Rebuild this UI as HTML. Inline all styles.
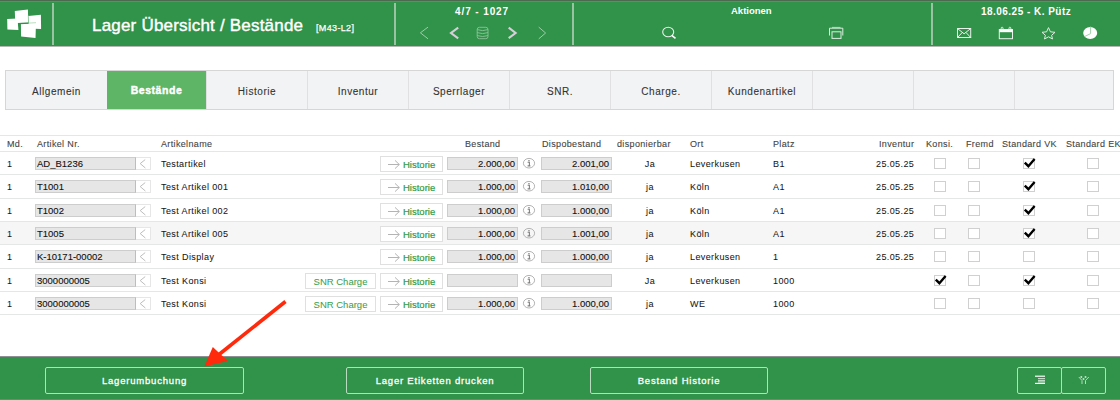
<!DOCTYPE html>
<html><head><meta charset="utf-8">
<style>
*{margin:0;padding:0;box-sizing:border-box}
html,body{width:1120px;height:400px;overflow:hidden;background:#fff;font-family:"Liberation Sans",sans-serif;color:#222}
svg{position:absolute;overflow:visible}
#hdr{position:absolute;left:0;top:0;width:1120px;height:46px;background:#31924a}
#hdr .top{position:absolute;left:0;top:0;width:1120px;height:1px;background:#4d6a50}
#hdr .top2{position:absolute;left:0;top:1px;width:1120px;height:1px;background:#479b5c}
#hdr .sep{position:absolute;top:3px;width:2px;height:42px;background:#9ac3a2}
.ht{position:absolute;color:#fff;font-weight:bold;font-size:10px;white-space:nowrap;line-height:1}
#hline{position:absolute;left:0;top:46px;width:1120px;height:1px;background:#b4b8b4}
#tabs{position:absolute;left:5px;top:70px;width:1109px;height:40px;border:1px solid #d6d6d6;background:#f2f3f5}
.tab{position:absolute;top:0;height:38px;border-right:1px solid #e0e0e2;font-size:10px;letter-spacing:0.55px;color:#333;text-align:center;line-height:41px;white-space:nowrap;-webkit-text-stroke:0.1px #333}
.tab.act{background:#5db565;color:#fff;font-weight:bold;top:0;height:38px;font-size:10.5px;letter-spacing:0.55px;-webkit-text-stroke:0.4px #fff;line-height:39px}
.hl{position:absolute;left:0;width:1120px;height:1px;background:#e4e7e5}
.th{position:absolute;top:140px;font-size:9px;color:#444;white-space:nowrap;line-height:1;letter-spacing:0.35px;-webkit-text-stroke:0.1px #444}
.row{position:absolute;left:0;width:1120px}
.td{position:absolute;top:9px;font-size:9px;letter-spacing:0.4px;color:#151515;white-space:nowrap;line-height:1;-webkit-text-stroke:0.05px #151515}
.inp{position:absolute;top:6px;height:13px;background:#e6e6e6;border:1px solid #cdcdcd;font-size:9.5px;line-height:12px;color:#111;padding:0 2px 0 1px;white-space:nowrap;-webkit-text-stroke:0.1px #111}
.inp.an{left:35px;width:101px;border-right-color:#bdbdbd}
.inp.num{text-align:right}
.lt{position:absolute;left:136px;top:6px;width:15px;height:13px;border:1px solid #e6e6e6;border-left:0;background:#fff}

.btn{position:absolute;top:5px;height:16px;border:1px solid #e0e0e0;background:#fff;font-size:9.5px;color:#2f9a44;line-height:16px;white-space:nowrap;-webkit-text-stroke:0.2px #2f9a44}
.btn.his{left:380px;width:63px;padding-left:22px;-webkit-text-stroke:0.2px #2f9a44}
.btn.snr{left:305px;width:71px;text-align:center;color:#3a9f4e;-webkit-text-stroke:0.05px #3a9f4e}
.arr{position:absolute;left:7px;top:6px;width:11px;height:1px;background:#aaa}
.arr:after{content:"";position:absolute;right:0;top:-3px;width:5px;height:5px;border-right:1px solid #aaa;border-top:1px solid #aaa;transform:rotate(45deg);transform-origin:100% 0}
.info{position:absolute;left:523px;top:7px;width:11px;height:11px;border:1px solid #aaa;border-radius:50%;font-size:8px;color:#888;text-align:center;line-height:9px;font-family:"Liberation Serif",serif}
.cb{position:absolute;top:7px;width:12px;height:11px;border:1px solid #d0d0d0;background:#fff}
.ck{position:absolute;left:1px;top:-2px;width:9px;height:12px}
#ftr{position:absolute;left:0;top:356px;width:1120px;height:44px;background:#31924a}
#ftr .top{position:absolute;left:0;top:0;width:1120px;height:1px;background:#8f8f96}
.fb{position:absolute;top:11px;height:27px;border:1px solid #b9dbc0;border-radius:2px;color:#fff;font-size:9.5px;font-weight:normal;letter-spacing:0.8px;text-align:center;line-height:25px;white-space:nowrap;-webkit-text-stroke:0.3px #fff}

#ftr .bot{position:absolute;left:0;top:43px;width:1120px;height:1px;background:#519b63}

</style></head><body>
<div id="hdr">
  <div class="top"></div><div class="top2"></div>
  <svg width="50" height="46" style="left:0;top:0">
    <polygon points="14.8,11 27.9,9.4 28.3,22.7 15.3,23.1" fill="#fff"/>
    <polygon points="7.2,19.1 17.5,18.6 18.4,29.9 7.4,29.4" fill="#fff"/>
    <polygon points="28.2,15.9 40.9,14.8 41.1,29 29.2,28.5" fill="#fff"/>
    <polyline points="28.3,15.5 28.6,22.9" fill="none" stroke="#8cc698" stroke-width="0.7"/>
    <polygon points="20.7,24 36,23.1 35.5,38 21.1,36.6" fill="#fff"/>
    <polyline points="20.4,37 20,23.6 28.6,23.1" fill="none" stroke="#31924a" stroke-width="1.3"/><polyline points="28.6,23.1 36,22.7" fill="none" stroke="#a8d4b0" stroke-width="0.8"/>
  </svg>
  <div class="sep" style="left:52px"></div>
  <div class="sep" style="left:394px"></div>
  <div class="sep" style="left:572px"></div>
  <div class="sep" style="left:931px"></div>
  <div class="ht" id="title" style="left:92px;top:17px;font-size:17px;font-weight:normal;letter-spacing:0.2px;-webkit-text-stroke:0.4px #fff">Lager Übersicht / Bestände</div>
  <div class="ht" id="code" style="left:316px;top:24px;font-size:9px;font-weight:normal;letter-spacing:0.35px;-webkit-text-stroke:0.25px #fff">[M43-L2]</div>
  <div class="ht" id="nav" style="left:455px;top:7px;letter-spacing:0.9px">4/7 - 1027</div>
  <div class="ht" id="akt" style="left:731px;top:6px;font-size:9.5px">Aktionen</div>
  <div class="ht" id="date" style="left:981px;top:7px;letter-spacing:0.47px">18.06.25 - K. Pütz</div>
  <svg width="1120" height="46" style="left:0;top:0">
    <polyline points="428,27.1 420.4,32.8 428,38.8" fill="none" stroke="#9acfa6" stroke-width="1"/>
    <polyline points="458.2,27.7 451,33 458.2,38.4" fill="none" stroke="#d6cfd9" stroke-width="2.1"/>
    <g fill="none" stroke="#8cc598" stroke-width="0.9">
      <rect x="477.2" y="27.3" width="10.8" height="11.4" rx="2.2"/>
      <path d="M477.2,29.6Q482.6,31.6 488,29.6M477.2,32.6Q482.6,34.6 488,32.6M477.2,35.6Q482.6,37.4 488,35.6"/>
    </g>
    <polyline points="508.7,27.6 515.6,33 508.7,38.1" fill="none" stroke="#d6cfd9" stroke-width="2.1"/>
    <polyline points="538.7,27.1 545.6,33 538.7,38.9" fill="none" stroke="#9acfa6" stroke-width="1"/>
    <ellipse cx="668.2" cy="32" rx="5.5" ry="4.7" fill="none" stroke="#e8f2ea" stroke-width="1.1"/>
    <line x1="671.8" y1="35.3" x2="675.5" y2="38.3" stroke="#fff" stroke-width="1.6"/>
    <g fill="none" stroke="#dcefe0" stroke-width="1">
      <path d="M829.5,35.5 V28.2 H842.8 V35.5"/><path d="M832,27.4 H840.5" stroke="#b8dcc0"/>
      <rect x="832" y="31.8" width="9" height="6.6"/>
    </g>
    <g fill="none" stroke="#e8f4ea" stroke-width="1">
      <rect x="957.5" y="28.5" width="13.2" height="9"/>
      <polyline points="957.5,28.5 964.1,33.8 970.7,28.5"/><path d="M957.5,37.5L962.3,32.4M970.7,37.5L965.9,32.4"/>
      <rect x="999.3" y="29.5" width="13.2" height="9.2"/>
    </g>
    <rect x="999.3" y="29.2" width="13.2" height="3" fill="#fff"/>
    <g fill="none" stroke="#e8f4ea" stroke-width="0.9"><rect x="1001.2" y="27.2" width="1.8" height="3.2" rx="0.9"/><rect x="1009" y="27.2" width="1.8" height="3.2" rx="0.9"/></g>
    <polygon points="1048.5,27.6 1050.4,31.8 1055,32.3 1051.6,35.3 1052.5,39 1048.5,36.8 1044.5,39 1045.4,35.3 1042,32.3 1046.6,31.8" fill="none" stroke="#dcefe0" stroke-width="1"/>
    <ellipse cx="1090.2" cy="33" rx="7" ry="6.1" fill="#fff"/>
    <polyline points="1090.6,26.6 1090.6,33.6 1084.5,36.6" fill="none" stroke="#a3d0ad" stroke-width="1"/>
  </svg>
</div>
<div id="hline"></div>
<div id="tabs">
  <div class="tab" style="left:0;width:102px">Allgemein</div>
  <div class="tab act" style="left:101px;width:100px">Bestände</div>
  <div class="tab" style="left:201px;width:101px">Historie</div>
  <div class="tab" style="left:302px;width:101px">Inventur</div>
  <div class="tab" style="left:403px;width:101px">Sperrlager</div>
  <div class="tab" style="left:504px;width:101px">SNR.</div>
  <div class="tab" style="left:605px;width:101px">Charge.</div>
  <div class="tab" style="left:706px;width:101px">Kundenartikel</div>
  <div class="tab" style="left:807px;width:101px"></div>
  <div class="tab" style="left:908px;width:101px"></div>
  <div class="tab" style="left:1009px;width:98px;border-right:0"></div>
</div>
<div class="hl" style="top:135px"></div>
<div class="th" style="left:7px">Md.</div>
<div class="th" style="left:37px">Artikel Nr.</div>
<div class="th" style="left:161px">Artikelname</div>
<div class="th" style="left:465px">Bestand</div>
<div class="th" style="left:542px">Dispobestand</div>
<div class="th" style="left:617px">disponierbar</div>
<div class="th" style="left:690px">Ort</div>
<div class="th" style="left:773px">Platz</div>
<div class="th" style="left:879px">Inventur</div>
<div class="th" style="left:926px">Konsi.</div>
<div class="th" style="left:966px">Fremd</div>
<div class="th" style="left:1002px">Standard VK</div>
<div class="th" style="left:1066px">Standard EK</div>


<div class="row" style="top:151px;height:23px;background:transparent">
<div class="td" style="left:7px">1</div>
<div class="inp an" style="left:35px">AD_B1236</div><div class="lt"><svg width="15" height="13" style="left:0;top:0"><polyline points="9.2,1.6 4.2,5.6 9.4,10" fill="none" stroke="#bdbdbd" stroke-width="1"/></svg></div>
<div class="td" style="left:161px">Testartikel</div>
<div class="btn his"><svg width="20" height="14" style="left:0;top:0"><path d="M7,7.5H18.3M14,3.4L18.3,7.5L14,11.6" fill="none" stroke="#b4b4b4" stroke-width="1"/></svg>Historie</div>
<div class="inp num" style="left:447px;width:71px">2.000,00</div>
<svg width="14" height="14" style="left:522px;top:5px"><ellipse cx="7" cy="7.2" rx="5.6" ry="4.8" fill="none" stroke="#b4b4b4" stroke-width="1"/><rect x="6.2" y="4.1" width="1.5" height="1.2" fill="#888"/><path d="M5.6,6.2H7.4V9.8M5.6,9.9H8.4" fill="none" stroke="#808080" stroke-width="1.1"/></svg>
<div class="inp num" style="left:541px;width:71px">2.001,00</div>
<div class="td" style="left:644px;width:12px;text-align:center">Ja</div>
<div class="td" style="left:690px">Leverkusen</div>
<div class="td" style="left:773px">B1</div>
<div class="td" style="left:876px">25.05.25</div>
<div class="cb" style="left:934px"></div>
<div class="cb" style="left:968px"></div>
<div class="cb" style="left:1023px"><svg width="14" height="12" style="left:-1px;top:-1px"><path d="M1.8,4.6L5.4,8.2L11.6,1" fill="none" stroke="#000" stroke-width="2.4"/></svg></div>
<div class="cb" style="left:1087px"></div>
</div>
<div class="row" style="top:174px;height:24px;background:transparent">
<div class="td" style="left:7px">1</div>
<div class="inp an" style="left:35px">T1001</div><div class="lt"><svg width="15" height="13" style="left:0;top:0"><polyline points="9.2,1.6 4.2,5.6 9.4,10" fill="none" stroke="#bdbdbd" stroke-width="1"/></svg></div>
<div class="td" style="left:161px">Test Artikel 001</div>
<div class="btn his"><svg width="20" height="14" style="left:0;top:0"><path d="M7,7.5H18.3M14,3.4L18.3,7.5L14,11.6" fill="none" stroke="#b4b4b4" stroke-width="1"/></svg>Historie</div>
<div class="inp num" style="left:447px;width:71px">1.000,00</div>
<svg width="14" height="14" style="left:522px;top:5px"><ellipse cx="7" cy="7.2" rx="5.6" ry="4.8" fill="none" stroke="#b4b4b4" stroke-width="1"/><rect x="6.2" y="4.1" width="1.5" height="1.2" fill="#888"/><path d="M5.6,6.2H7.4V9.8M5.6,9.9H8.4" fill="none" stroke="#808080" stroke-width="1.1"/></svg>
<div class="inp num" style="left:541px;width:71px">1.010,00</div>
<div class="td" style="left:644px;width:12px;text-align:center">ja</div>
<div class="td" style="left:690px">Köln</div>
<div class="td" style="left:773px">A1</div>
<div class="td" style="left:876px">25.05.25</div>
<div class="cb" style="left:934px"></div>
<div class="cb" style="left:968px"></div>
<div class="cb" style="left:1023px"><svg width="14" height="12" style="left:-1px;top:-1px"><path d="M1.8,4.6L5.4,8.2L11.6,1" fill="none" stroke="#000" stroke-width="2.4"/></svg></div>
<div class="cb" style="left:1087px"></div>
</div>
<div class="row" style="top:198px;height:23px;background:transparent">
<div class="td" style="left:7px">1</div>
<div class="inp an" style="left:35px">T1002</div><div class="lt"><svg width="15" height="13" style="left:0;top:0"><polyline points="9.2,1.6 4.2,5.6 9.4,10" fill="none" stroke="#bdbdbd" stroke-width="1"/></svg></div>
<div class="td" style="left:161px">Test Artikel 002</div>
<div class="btn his"><svg width="20" height="14" style="left:0;top:0"><path d="M7,7.5H18.3M14,3.4L18.3,7.5L14,11.6" fill="none" stroke="#b4b4b4" stroke-width="1"/></svg>Historie</div>
<div class="inp num" style="left:447px;width:71px">1.000,00</div>
<svg width="14" height="14" style="left:522px;top:5px"><ellipse cx="7" cy="7.2" rx="5.6" ry="4.8" fill="none" stroke="#b4b4b4" stroke-width="1"/><rect x="6.2" y="4.1" width="1.5" height="1.2" fill="#888"/><path d="M5.6,6.2H7.4V9.8M5.6,9.9H8.4" fill="none" stroke="#808080" stroke-width="1.1"/></svg>
<div class="inp num" style="left:541px;width:71px">1.000,00</div>
<div class="td" style="left:644px;width:12px;text-align:center">ja</div>
<div class="td" style="left:690px">Köln</div>
<div class="td" style="left:773px">A1</div>
<div class="td" style="left:876px">25.05.25</div>
<div class="cb" style="left:934px"></div>
<div class="cb" style="left:968px"></div>
<div class="cb" style="left:1023px"><svg width="14" height="12" style="left:-1px;top:-1px"><path d="M1.8,4.6L5.4,8.2L11.6,1" fill="none" stroke="#000" stroke-width="2.4"/></svg></div>
<div class="cb" style="left:1087px"></div>
</div>
<div class="row" style="top:221px;height:23px;background:#f6f6f6">
<div class="td" style="left:7px">1</div>
<div class="inp an" style="left:35px">T1005</div><div class="lt"><svg width="15" height="13" style="left:0;top:0"><polyline points="9.2,1.6 4.2,5.6 9.4,10" fill="none" stroke="#bdbdbd" stroke-width="1"/></svg></div>
<div class="td" style="left:161px">Test Artikel 005</div>
<div class="btn his"><svg width="20" height="14" style="left:0;top:0"><path d="M7,7.5H18.3M14,3.4L18.3,7.5L14,11.6" fill="none" stroke="#b4b4b4" stroke-width="1"/></svg>Historie</div>
<div class="inp num" style="left:447px;width:71px">1.000,00</div>
<svg width="14" height="14" style="left:522px;top:5px"><ellipse cx="7" cy="7.2" rx="5.6" ry="4.8" fill="none" stroke="#b4b4b4" stroke-width="1"/><rect x="6.2" y="4.1" width="1.5" height="1.2" fill="#888"/><path d="M5.6,6.2H7.4V9.8M5.6,9.9H8.4" fill="none" stroke="#808080" stroke-width="1.1"/></svg>
<div class="inp num" style="left:541px;width:71px">1.001,00</div>
<div class="td" style="left:644px;width:12px;text-align:center">ja</div>
<div class="td" style="left:690px">Köln</div>
<div class="td" style="left:773px">A1</div>
<div class="td" style="left:876px">25.05.25</div>
<div class="cb" style="left:934px"></div>
<div class="cb" style="left:968px"></div>
<div class="cb" style="left:1023px"><svg width="14" height="12" style="left:-1px;top:-1px"><path d="M1.8,4.6L5.4,8.2L11.6,1" fill="none" stroke="#000" stroke-width="2.4"/></svg></div>
<div class="cb" style="left:1087px"></div>
</div>
<div class="row" style="top:244px;height:24px;background:transparent">
<div class="td" style="left:7px">1</div>
<div class="inp an" style="left:35px">K-10171-00002</div><div class="lt"><svg width="15" height="13" style="left:0;top:0"><polyline points="9.2,1.6 4.2,5.6 9.4,10" fill="none" stroke="#bdbdbd" stroke-width="1"/></svg></div>
<div class="td" style="left:161px">Test Display</div>
<div class="btn his"><svg width="20" height="14" style="left:0;top:0"><path d="M7,7.5H18.3M14,3.4L18.3,7.5L14,11.6" fill="none" stroke="#b4b4b4" stroke-width="1"/></svg>Historie</div>
<div class="inp num" style="left:447px;width:71px">1.000,00</div>
<svg width="14" height="14" style="left:522px;top:5px"><ellipse cx="7" cy="7.2" rx="5.6" ry="4.8" fill="none" stroke="#b4b4b4" stroke-width="1"/><rect x="6.2" y="4.1" width="1.5" height="1.2" fill="#888"/><path d="M5.6,6.2H7.4V9.8M5.6,9.9H8.4" fill="none" stroke="#808080" stroke-width="1.1"/></svg>
<div class="inp num" style="left:541px;width:71px">1.000,00</div>
<div class="td" style="left:644px;width:12px;text-align:center">ja</div>
<div class="td" style="left:690px">Leverkusen</div>
<div class="td" style="left:773px">1</div>
<div class="td" style="left:876px">25.05.25</div>
<div class="cb" style="left:934px"></div>
<div class="cb" style="left:968px"></div>
<div class="cb" style="left:1023px"></div>
<div class="cb" style="left:1087px"></div>
</div>
<div class="row" style="top:268px;height:23px;background:transparent">
<div class="td" style="left:7px">1</div>
<div class="inp an" style="left:35px">3000000005</div><div class="lt"><svg width="15" height="13" style="left:0;top:0"><polyline points="9.2,1.6 4.2,5.6 9.4,10" fill="none" stroke="#bdbdbd" stroke-width="1"/></svg></div>
<div class="td" style="left:161px">Test Konsi</div>
<div class="btn snr">SNR Charge</div>
<div class="btn his"><svg width="20" height="14" style="left:0;top:0"><path d="M7,7.5H18.3M14,3.4L18.3,7.5L14,11.6" fill="none" stroke="#b4b4b4" stroke-width="1"/></svg>Historie</div>
<div class="inp num" style="left:447px;width:71px"></div>
<svg width="14" height="14" style="left:522px;top:5px"><ellipse cx="7" cy="7.2" rx="5.6" ry="4.8" fill="none" stroke="#b4b4b4" stroke-width="1"/><rect x="6.2" y="4.1" width="1.5" height="1.2" fill="#888"/><path d="M5.6,6.2H7.4V9.8M5.6,9.9H8.4" fill="none" stroke="#808080" stroke-width="1.1"/></svg>
<div class="inp num" style="left:541px;width:71px"></div>
<div class="td" style="left:644px;width:12px;text-align:center">Ja</div>
<div class="td" style="left:690px">Leverkusen</div>
<div class="td" style="left:773px">1000</div>
<div class="cb" style="left:934px"><svg width="14" height="12" style="left:-1px;top:-1px"><path d="M1.8,4.6L5.4,8.2L11.6,1" fill="none" stroke="#000" stroke-width="2.4"/></svg></div>
<div class="cb" style="left:968px"></div>
<div class="cb" style="left:1023px"><svg width="14" height="12" style="left:-1px;top:-1px"><path d="M1.8,4.6L5.4,8.2L11.6,1" fill="none" stroke="#000" stroke-width="2.4"/></svg></div>
<div class="cb" style="left:1087px"></div>
</div>
<div class="row" style="top:291px;height:23px;background:transparent">
<div class="td" style="left:7px">1</div>
<div class="inp an" style="left:35px">3000000005</div><div class="lt"><svg width="15" height="13" style="left:0;top:0"><polyline points="9.2,1.6 4.2,5.6 9.4,10" fill="none" stroke="#bdbdbd" stroke-width="1"/></svg></div>
<div class="td" style="left:161px">Test Konsi</div>
<div class="btn snr">SNR Charge</div>
<div class="btn his"><svg width="20" height="14" style="left:0;top:0"><path d="M7,7.5H18.3M14,3.4L18.3,7.5L14,11.6" fill="none" stroke="#b4b4b4" stroke-width="1"/></svg>Historie</div>
<div class="inp num" style="left:447px;width:71px">1.000,00</div>
<svg width="14" height="14" style="left:522px;top:5px"><ellipse cx="7" cy="7.2" rx="5.6" ry="4.8" fill="none" stroke="#b4b4b4" stroke-width="1"/><rect x="6.2" y="4.1" width="1.5" height="1.2" fill="#888"/><path d="M5.6,6.2H7.4V9.8M5.6,9.9H8.4" fill="none" stroke="#808080" stroke-width="1.1"/></svg>
<div class="inp num" style="left:541px;width:71px">1.000,00</div>
<div class="td" style="left:644px;width:12px;text-align:center">ja</div>
<div class="td" style="left:690px">WE</div>
<div class="td" style="left:773px">1000</div>
<div class="cb" style="left:934px"></div>
<div class="cb" style="left:968px"></div>
<div class="cb" style="left:1023px"></div>
<div class="cb" style="left:1087px"></div>
</div>
<div class="hl" style="top:151px"></div>
<div class="hl" style="top:174px"></div>
<div class="hl" style="top:198px"></div>
<div class="hl" style="top:221px"></div>
<div class="hl" style="top:244px"></div>
<div class="hl" style="top:268px"></div>
<div class="hl" style="top:291px"></div>
<div class="hl" style="top:314px"></div>
<div id="ftr">
  <div class="top"></div><div class="bot"></div>
  <div class="fb" style="left:45px;width:199px">Lagerumbuchung</div>
  <div class="fb" style="left:346px;width:178px">Lager Etiketten drucken</div>
  <div class="fb" style="left:590px;width:178px">Bestand Historie</div>
  <div class="fb" style="left:1017px;width:45px"></div>
  <div class="fb" style="left:1061px;width:45px"></div>
</div>
<svg width="1120" height="400" style="left:0;top:0">
  <g stroke="#fff" stroke-width="1.2">
    <line x1="1035" y1="376.2" x2="1045" y2="376.2"/>
    <line x1="1035" y1="383.4" x2="1045" y2="383.4"/>
  </g>
  <g stroke="#e0f0e3" stroke-width="0.9"><line x1="1038" y1="378.6" x2="1045" y2="378.6"/><line x1="1038" y1="380.4" x2="1045" y2="380.4"/><line x1="1038" y1="381.9" x2="1045" y2="381.9"/></g>
  <g fill="none" stroke="#b5dabd" stroke-width="1">
    <path d="M1078.8,377L1082,380.5V384M1088.8,377L1085.5,380.5V384"/>
  </g>
  <g fill="#c5e3cb"><circle cx="1081.3" cy="377" r="1"/><circle cx="1085.5" cy="377" r="1"/><circle cx="1083.5" cy="379" r="1"/></g>
  <line x1="285.5" y1="301.5" x2="219" y2="354.5" stroke="#ff2a0c" stroke-width="3.6"/>
  <polygon points="204.4,366.6 212.8,346.9 227.8,361" fill="#ff2a0c"/>
</svg>

</body></html>
